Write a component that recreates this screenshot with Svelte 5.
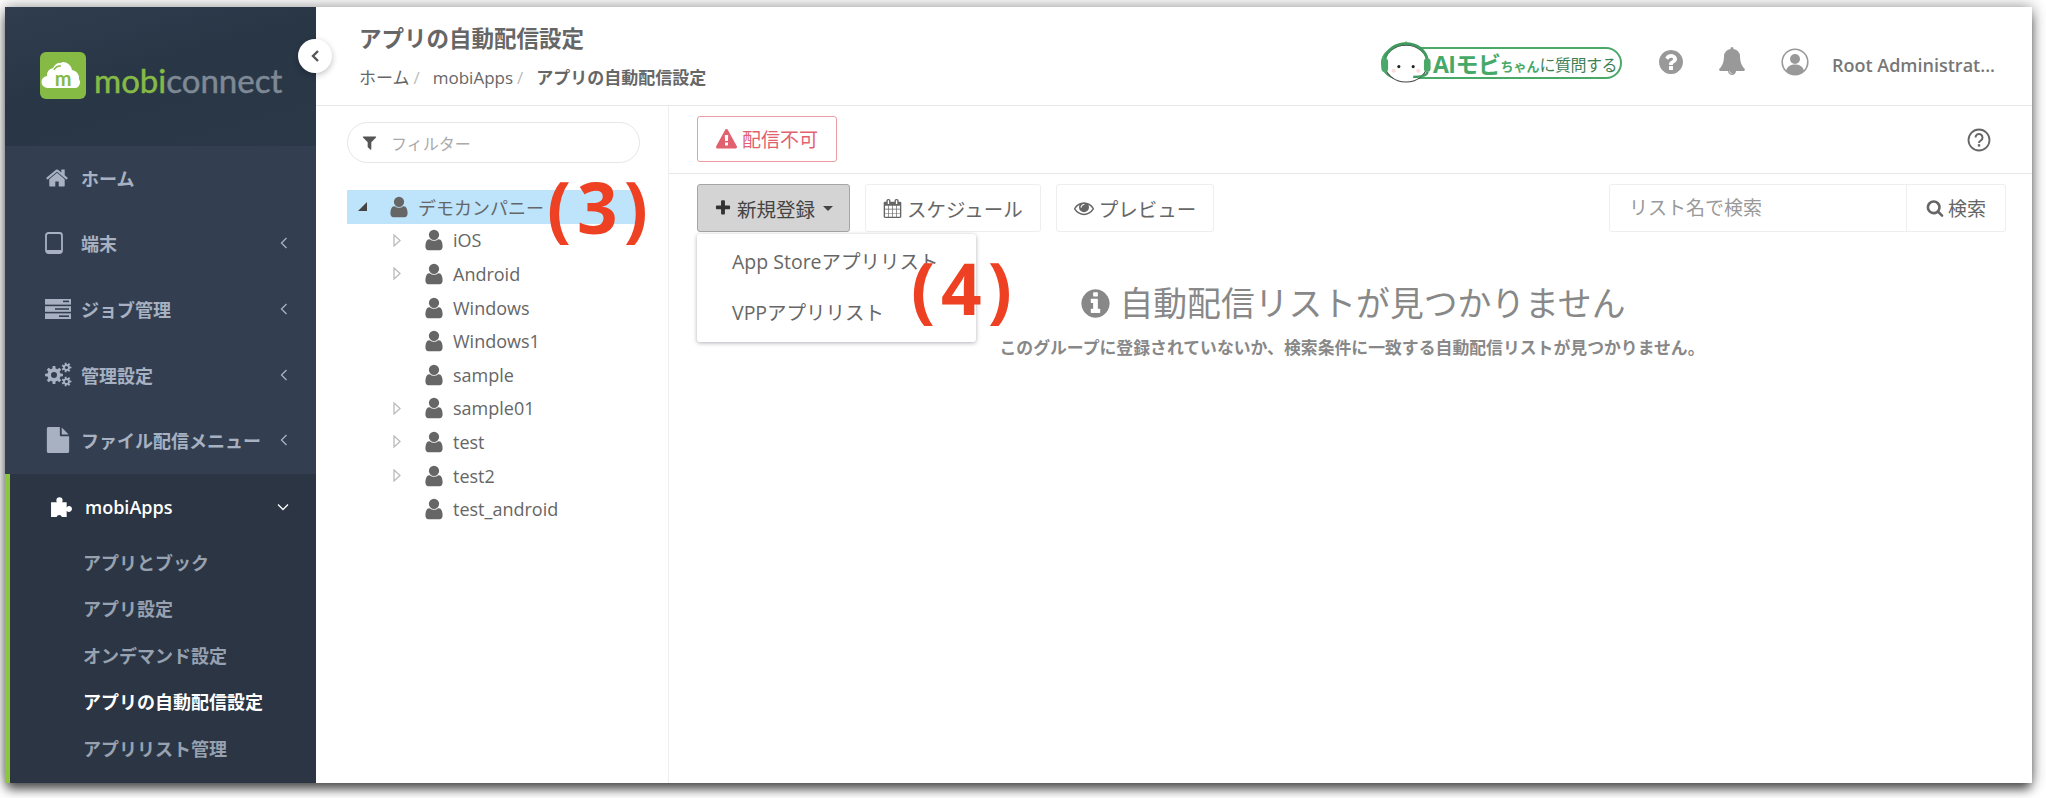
<script lang="ts">
	// FontAwesome-style glyphs, 1792 grid
	const fa = {
		home: 'M1472 992v480q0 26-19 45t-45 19h-384v-384h-256v384h-384q-26 0-45-19t-19-45v-480q0-1 .5-3t.5-3l575-474 575 474q1 2 1 6zm223-69l-62 74q-8 9-21 11h-3q-13 0-21-7l-692-577-692 577q-12 8-24 7-13-2-21-11l-62-74q-8-10-7-23.5t11-21.5l719-599q32-26 76-26t76 26l244 204v-195q0-14 9-23t23-9h192q14 0 23 9t9 23v408l219 182q10 8 11 21.5t-7 23.5z',
		user: 'M1536 1399q0 109-62.5 187t-150.5 78h-854q-88 0-150.5-78t-62.5-187q0-85 8.5-160.5t31.5-152 58.5-131 94-89 134.5-34.5q131 128 313 128t313-128q76 0 134.5 34.5t94 89 58.5 131 31.5 152 8.5 160.5zm-256-887q0 159-112.5 271.5t-271.5 112.5-271.5-112.5-112.5-271.5 112.5-271.5 271.5-112.5 271.5 112.5 112.5 271.5z',
		search: 'M1216 832q0-185-131.5-316.5t-316.5-131.5-316.5 131.5-131.5 316.5 131.5 316.5 316.5 131.5 316.5-131.5 131.5-316.5zm512 832q0 52-38 90t-90 38q-54 0-90-38l-343-342q-179 124-399 124-143 0-273.5-55.5t-225-150-150-225-55.5-273.5 55.5-273.5 150-225 225-150 273.5-55.5 273.5 55.5 225 150 150 225 55.5 273.5q0 220-124 399l343 343q37 37 37 90z',
		filter: 'M1595 295q17 41-14 70l-493 493v742q0 42-39 59-13 5-25 5-27 0-45-19l-256-256q-19-19-19-45v-486l-493-493q-31-29-14-70 17-39 59-39h1280q42 0 59 39z',
		plus: 'M1600 736v192q0 40-28 68t-68 28h-416v416q0 40-28 68t-68 28h-192q-40 0-68-28t-28-68v-416h-416q-40 0-68-28t-28-68v-192q0-40 28-68t68-28h416v-416q0-40 28-68t68-28h192q40 0 68 28t28 68v416h416q40 0 68 28t28 68z',
		warning: 'M1024 1375v-190q0-14-9.5-23.5t-22.5-9.5h-192q-13 0-22.5 9.5t-9.5 23.5v190q0 14 9.5 23.5t22.5 9.5h192q13 0 22.5-9.5t9.5-23.5zm-2-374l18-459q0-12-10-19-13-11-24-11h-220q-11 0-24 11-10 7-10 21l17 457q0 10 10 16.5t24 6.5h185q14 0 23.5-6.5t10.5-16.5zm-14-934l768 1408q35 63-2 126-17 29-46.5 46t-63.5 17h-1536q-34 0-63.5-17t-46.5-46q-37-63-2-126l768-1408q17-31 47-49t65-18 65 18 47 49z',
		info: 'M1152 1376v-160q0-14-9-23t-23-9h-96v-512q0-14-9-23t-23-9h-320q-14 0-23 9t-9 23v160q0 14 9 23t23 9h96v320h-96q-14 0-23 9t-9 23v160q0 14 9 23t23 9h448q14 0 23-9t9-23zm-128-896v-160q0-14-9-23t-23-9h-192q-14 0-23 9t-9 23v160q0 14 9 23t23 9h192q14 0 23-9t9-23zm640 416q0 209-103 385.5t-279.5 279.5-385.5 103-385.5-103-279.5-279.5-103-385.5 103-385.5 279.5-279.5 385.5-103 385.5 103 279.5 279.5 103 385.5z',
		question: 'M1024 1376v-192q0-14-9-23t-23-9h-192q-14 0-23 9t-9 23v192q0 14 9 23t23 9h192q14 0 23-9t9-23zm256-672q0-88-55.5-163t-138.5-116-170-41q-243 0-371 213-15 24 8 42l132 100q7 6 19 6 16 0 25-12 53-68 86-92 34-24 86-24 48 0 85.5 26t37.5 59q0 38-20 61t-68 45q-63 28-115.5 86.5t-52.5 125.5v36q0 14 9 23t23 9h192q14 0 23-9t9-23q0-19 21.5-49.5t54.5-49.5q32-18 49-28.5t46-35 44.5-48 28-60.5 12.5-81zm384 192q0 209-103 385.5t-279.5 279.5-385.5 103-385.5-103-279.5-279.5-103-385.5 103-385.5 279.5-279.5 385.5-103 385.5 103 279.5 279.5 103 385.5z',
		bell: 'M912 1696q0-16-16-16-59 0-101.5-42.5t-42.5-101.5q0-16-16-16t-16 16q0 73 51.5 124.5t124.5 51.5q16 0 16-16zm816-288q0 52-38 90t-90 38h-448q0 106-75 181t-181 75-181-75-75-181h-448q-52 0-90-38t-38-90q50-42 91-88t85-119.5 74.5-158.5 50-206 19.5-260q0-152 117-282.5t307-158.5q-8-19-8-39 0-40 28-68t68-28 68 28 28 68q0 20-8 39 190 28 307 158.5t117 282.5q0 139 19.5 260t50 206 74.5 158.5 85 119.5 91 88z',
		file: 'M1152 512v-472q22 14 36 28l408 408q14 14 28 36h-472zm-128 32q0 40 28 68t68 28h544v1056q0 40-28 68t-68 28h-1344q-40 0-68-28t-28-68v-1600q0-40 28-68t68-28h800v544z',
		eye: 'M1664 960q-152-236-381-353 61 104 61 225 0 185-131.5 316.5t-316.5 131.5-316.5-131.5-131.5-316.5q0-121 61-225-229 117-381 353 133 205 333.5 326.5t434.5 121.5 434.5-121.5 333.5-326.5zm-720-384q0-20-14-34t-34-14q-125 0-214.5 89.5t-89.5 214.5q0 20 14 34t34 14 34-14 14-34q0-86 61-147t147-61q20 0 34-14t14-34zm848 384q0 34-20 69-140 230-376.5 368.5t-499.5 138.5-499.5-139-376.5-368q-20-35-20-69t20-69q140-229 376.5-368t499.5-139 499.5 139 376.5 368q20 35 20 69z',
		calendar: 'M192 1664h288v-288h-288v288zm352 0h320v-288h-320v288zm-352-352h288v-320h-288v320zm352 0h320v-320h-320v320zm-352-384h288v-288h-288v288zm736 736h320v-288h-320v288zm-384-736h320v-288h-320v288zm768 736h288v-288h-288v288zm-384-352h320v-320h-320v320zm-352-864v-288q0-13-9.5-22.5t-22.5-9.5h-64q-13 0-22.5 9.5t-9.5 22.5v288q0 13 9.5 22.5t22.5 9.5h64q13 0 22.5-9.5t9.5-22.5zm736 864h288v-320h-288v320zm-384-384h320v-288h-320v288zm384 0h288v-288h-288v288zm32-480v-288q0-13-9.5-22.5t-22.5-9.5h-64q-13 0-22.5 9.5t-9.5 22.5v288q0 13 9.5 22.5t22.5 9.5h64q13 0 22.5-9.5t9.5-22.5zm384-64v1280q0 52-38 90t-90 38h-1408q-52 0-90-38t-38-90v-1280q0-52 38-90t90-38h128v-96q0-66 47-113t113-47h64q66 0 113 47t47 113v96h384v-96q0-66 47-113t113-47h64q66 0 113 47t47 113v96h128q52 0 90 38t38 90z'
	};

	// toothed wheel with a round hole, drawn with fill-rule evenodd
	function gear(cx: number, cy: number, outer: number, inner: number, hole: number, teeth: number) {
		const pts: string[] = [];
		const step = (Math.PI * 2) / teeth;
		for (let i = 0; i < teeth; i++) {
			const a = i * step;
			const w = step * 0.24;
			[[a - w * 1.3, inner], [a - w * 0.8, outer], [a + w * 0.8, outer], [a + w * 1.3, inner]].forEach(([t, r]) => {
				pts.push(`${(cx + Math.cos(t) * r).toFixed(2)} ${(cy + Math.sin(t) * r).toFixed(2)}`);
			});
		}
		return `M${pts.join('L')}Z M${cx - hole} ${cy}a${hole} ${hole} 0 1 0 ${hole * 2} 0a${hole} ${hole} 0 1 0 ${-hole * 2} 0Z`;
	}

	const navItems = [
		{ icon: 'home', label: 'ホーム', arrow: false },
		{ icon: 'tablet', label: '端末', arrow: true },
		{ icon: 'server', label: 'ジョブ管理', arrow: true },
		{ icon: 'cogs', label: '管理設定', arrow: true },
		{ icon: 'file', label: 'ファイル配信メニュー', arrow: true }
	];

	const subItems = [
		{ label: 'アプリとブック' },
		{ label: 'アプリ設定' },
		{ label: 'オンデマンド設定' },
		{ label: 'アプリの自動配信設定', active: true },
		{ label: 'アプリリスト管理' }
	];

	const treeChildren = [
		{ label: 'iOS', more: true },
		{ label: 'Android', more: true },
		{ label: 'Windows', more: false },
		{ label: 'Windows1', more: false },
		{ label: 'sample', more: false },
		{ label: 'sample01', more: true },
		{ label: 'test', more: true },
		{ label: 'test2', more: true },
		{ label: 'test_android', more: false }
	];
</script>

<div class="page">
	<div class="window">
		<aside class="sidebar">
			<div class="logo-block">
				<svg class="logo-mark" viewBox="0 0 46 47">
					<rect width="46" height="47" rx="6" fill="#85bb45" />
					<path d="M8 36a6 6 0 0 1-1-12 7 7 0 0 1 6-8 10 10 0 0 1 19 2 8 8 0 0 1 7 9 6 6 0 0 1-3 9z" fill="#fff" />
					<path d="M12 15a10 10 0 0 1 10-5M14 18a7 7 0 0 1 7-4" fill="none" stroke="#85bb45" stroke-width="1.5" />
					<text x="23" y="34" text-anchor="middle" class="logo-m">m</text>
				</svg>
				<span class="logo-word"><b>mobi</b>connect</span>
			</div>
			<nav class="menu">
				{#each navItems as item}
					<div class="nav-item">
						<span class="nav-icon">
							{#if item.icon === 'home'}
								<svg viewBox="0 0 1792 1792" width="24" height="24"><path d={fa.home} /></svg>
							{:else if item.icon === 'file'}
								<svg viewBox="0 0 1792 1792" width="26" height="26"><path d={fa.file} /></svg>
							{:else if item.icon === 'tablet'}
								<svg viewBox="0 0 18 22" width="18" height="22">
									<rect x="1" y="1" width="16" height="20" rx="2.5" fill="none" stroke="currentColor" stroke-width="1.8" />
									<rect x="2" y="18" width="14" height="2.5" />
								</svg>
							{:else if item.icon === 'server'}
								<svg viewBox="0 0 26 20" width="26" height="20">
									<rect y="0" width="26" height="5.6" />
									<rect y="7.2" width="26" height="5.6" />
									<rect y="14.4" width="26" height="5.6" />
									<rect x="18" y="1.6" width="6" height="1.6" fill="#333f50" />
									<rect x="10" y="9.2" width="14" height="1.6" fill="#333f50" />
									<rect x="14" y="16.4" width="10" height="1.6" fill="#333f50" />
								</svg>
							{:else}
								<svg viewBox="0 0 27 25" width="27" height="25" fill-rule="evenodd">
									<path d={gear(9, 13, 9, 6.6, 3, 8)} />
									<path d={gear(21.5, 5.500, 5, 3.500, 1.600, 7)} />
									<path d={gear(21.5, 19.500, 5, 3.500, 1.600, 7)} />
								</svg>
							{/if}
						</span>
						<span class="nav-label">{item.label}</span>
						{#if item.arrow}
							<svg class="nav-arrow" viewBox="0 0 8 12" width="8" height="12"><path d="M6.5 1 1.500 6l5 5" /></svg>
						{/if}
					</div>
				{/each}
				<div class="group">
					<div class="nav-item group-head">
						<svg class="puzzle" viewBox="0 0 24 24" width="25" height="25">
							<path d="M1 8h5.600a3 3 0 0 1-.5-1.800 3 3 0 0 1 6 0 3 3 0 0 1-.5 1.800H16v5a2.800 2.800 0 0 1 4.200-.8 2.800 2.800 0 0 1-.2 4.300 2.800 2.800 0 0 1-4-.5V22h-4.500a2.800 2.800 0 0 0-5.200 0H1z" fill="#fff" />
						</svg>
						<span class="nav-label">mobiApps</span>
						<svg class="nav-arrow down" viewBox="0 0 12 8" width="12" height="8"><path d="M1 1.500l5 5 5-5" /></svg>
					</div>
					{#each subItems as sub}
						<div class="sub-item" class:active={sub.active}>{sub.label}</div>
					{/each}
				</div>
			</nav>
		</aside>

		<button class="collapse" aria-label="collapse">
			<svg viewBox="0 0 10 14" width="10" height="14"><path d="M8 2 3 7l5 5" /></svg>
		</button>

		<main class="main">
			<header class="topbar">
				<div class="heading">
					<h1>アプリの自動配信設定</h1>
					<div class="crumbs">
						<span>ホーム</span><i>/</i><span>mobiApps</span><i>/</i><strong>アプリの自動配信設定</strong>
					</div>
				</div>
				<div class="top-actions">
					<div class="ai-btn">
						<svg class="ai-face" viewBox="0 0 50 42" width="52" height="43">
							<path d="M22 4c1-2 3-3 4-3 0 2-1 3-3 4z" fill="#a9d18e" />
							<ellipse cx="25" cy="23" rx="21" ry="18" fill="#fff" stroke="#444" stroke-width="1" />
							<path d="M4 20C6 9 15 3.500 25 3.500S44 9 46 20" fill="none" stroke="#3f9a5f" stroke-width="2.800" />
							<rect x="1" y="18" width="6.500" height="13" rx="3" fill="#4aa868" />
							<rect x="42.500" y="18" width="6.500" height="13" rx="3" fill="#4aa868" />
							<path d="M46 31c0 4-6 5-14 5" fill="none" stroke="#3f9a5f" stroke-width="2.200" />
							<circle cx="18" cy="26" r="1.500" fill="#222" />
							<circle cx="32" cy="26" r="1.500" fill="#222" />
							<circle cx="13" cy="30" r="2" fill="#fbdcdc" />
							<circle cx="37" cy="30" r="2" fill="#fbdcdc" />
						</svg>
						<span class="ai-big">AIモビ</span><span class="ai-small">ちゃん</span><span class="ai-mid">に質問する</span>
					</div>
					<svg class="top-icon q" viewBox="0 0 1792 1792" width="28" height="28"><path d={fa.question} /></svg>
					<svg class="top-icon bell" viewBox="0 0 1792 1792" width="28" height="28"><path d={fa.bell} /></svg>
					<svg class="top-icon avatar" viewBox="0 0 28 28" width="28" height="28">
						<circle cx="14" cy="14" r="12.800" fill="#fff" stroke="#999" stroke-width="1.600" />
						<circle cx="14" cy="11" r="5" />
						<path d="M5 23c1-5 5-6.500 9-6.500s8 1.500 9 6.500a12.500 12.500 0 0 1-18 0z" />
					</svg>
					<span class="username">Root Administrat...</span>
				</div>
			</header>

			<div class="body">
				<section class="tree-panel">
					<div class="filter">
						<svg viewBox="0 0 1792 1792" width="17" height="17"><path d={fa.filter} /></svg>
						<span>フィルター</span>
					</div>
					<div class="tree">
						<div class="tree-row root">
							<span class="tri-open"></span>
							<svg class="person" viewBox="0 0 1792 1792" width="24" height="24"><path d={fa.user} /></svg>
							<span>デモカンパニー</span>
						</div>
						{#each treeChildren as node}
							<div class="tree-row child">
								<span class="tri-slot">
									{#if node.more}
										<svg viewBox="0 0 8 13" width="8" height="13"><path d="M1 1l6 5.500-6 5.500z" /></svg>
									{/if}
								</span>
								<svg class="person" viewBox="0 0 1792 1792" width="24" height="24"><path d={fa.user} /></svg>
								<span>{node.label}</span>
							</div>
						{/each}
					</div>
					<span class="callout three">(3)</span>
				</section>

				<section class="content">
					<div class="status-bar">
						<div class="status">
							<svg viewBox="0 0 1792 1792" width="21" height="21"><path d={fa.warning} /></svg>
							配信不可
						</div>
						<svg class="help" viewBox="0 0 24 24" width="24" height="24">
							<circle cx="12" cy="12" r="10.500" fill="none" stroke="#666" stroke-width="1.800" />
							<path d="M8.500 9.500a3.500 3.500 0 1 1 5.300 3c-1.300.8-1.800 1.300-1.800 2.500" fill="none" stroke="#666" stroke-width="2" />
							<rect x="10.800" y="16.200" width="2.400" height="2.400" fill="#666" />
						</svg>
					</div>

					<div class="toolbar">
						<div class="left-tools">
							<div class="btn primary">
								<svg viewBox="0 0 1792 1792" width="18" height="18"><path d={fa.plus} /></svg>
								新規登録
								<span class="caret"></span>
							</div>
							<div class="btn">
								<svg viewBox="0 0 1792 1792" width="19" height="19"><path d={fa.calendar} /></svg>
								スケジュール
							</div>
							<div class="btn">
								<svg viewBox="0 0 1792 1792" width="20" height="20"><path d={fa.eye} /></svg>
								プレビュー
							</div>
						</div>
						<div class="search">
							<span class="search-input">リスト名で検索</span>
							<span class="search-btn">
								<svg viewBox="0 0 1792 1792" width="18" height="18"><path d={fa.search} /></svg>
								検索
							</span>
						</div>
					</div>

					<div class="dropdown">
						<div>App Storeアプリリスト</div>
						<div>VPPアプリリスト</div>
					</div>

					<div class="empty">
						<h2>
							<svg viewBox="0 0 1792 1792" width="33" height="33"><path d={fa.info} /></svg>
							自動配信リストが見つかりません
						</h2>
						<p>このグループに登録されていないか、検索条件に一致する自動配信リストが見つかりません。</p>
					</div>

					<span class="callout four">(4)</span>
				</section>
			</div>
		</main>
	</div>
</div>

<style>
	:global(body) {
		margin: 0;
		background: #fff;
	}

	.page {
		width: 2046px;
		height: 798px;
		box-sizing: border-box;
		padding: 7px 14px 15px 5px;
		overflow: hidden;
		font-family: 'Open Sans', 'Noto Sans CJK JP', sans-serif;
		color: #676a6c;
	}

	.window {
		position: relative;
		display: flex;
		height: 776px;
		background: #fff;
		box-shadow: 0 8px 10px -2px rgba(0, 0, 0, 0.6), 0 0 14px rgba(0, 0, 0, 0.45);
	}

	.sidebar {
		width: 311px;
		flex-shrink: 0;
		background: #333f50;
		overflow: hidden;
	}

	.logo-block {
		height: 139px;
		box-sizing: border-box;
		padding: 45px 0 0 35px;
		display: flex;
		align-items: flex-start;
		gap: 8px;
		background: linear-gradient(165deg, #2f3d4e 0%, #293646 45%, #2a3848 100%);
	}

	.logo-mark {
		width: 46px;
		height: 47px;
		flex-shrink: 0;
	}

	.logo-m {
		font-family: 'Lato', sans-serif;
		font-size: 20px;
		font-weight: 700;
		fill: #85bb45;
	}

	.logo-word {
		font-family: 'Lato', sans-serif;
		font-size: 33px;
		line-height: 56px;
		-webkit-text-stroke: 0.5px currentColor;
		color: #7f8995;
	}

	.logo-word b {
		font-weight: 400;
		color: #85bb45;
	}

	.nav-item {
		position: relative;
		height: 65.6px;
		box-sizing: border-box;
		padding: 0 0 2px 40px;
		display: flex;
		align-items: center;
		color: #a7b1c2;
		font-size: 18px;
		font-weight: 600;
	}

	.nav-icon {
		width: 36px;
		display: flex;
		align-items: center;
	}

	.nav-icon svg {
		fill: currentColor;
	}

	.nav-arrow {
		position: absolute;
		right: 28px;
		fill: none;
		stroke: #a7b1c2;
		stroke-width: 1.300;
	}

	.nav-arrow.down {
		right: 27px;
		stroke: #fff;
	}

	.group {
		background: #2b3544;
		border-left: 5px solid #8cc63f;
		height: 320px;
	}

	.group-head {
		padding: 0 0 0 36px;
		color: #fff;
		gap: 10px;
	}

	.puzzle {
		margin-left: 4px;
	}

	.sub-item {
		height: 46.500px;
		line-height: 46.500px;
		padding-left: 73px;
		color: #97a1af;
		font-size: 18px;
		font-weight: 600;
	}

	.sub-item.active {
		color: #fff;
	}

	.collapse {
		position: absolute;
		left: 293px;
		top: 32px;
		width: 34px;
		height: 34px;
		padding: 0;
		border: none;
		border-radius: 50%;
		background: #fff;
		box-shadow: 0 2px 6px rgba(0, 0, 0, 0.25);
		display: flex;
		align-items: center;
		justify-content: center;
		z-index: 3;
	}

	.collapse path {
		fill: none;
		stroke: #555;
		stroke-width: 2.400;
	}

	.main {
		flex: 1;
		min-width: 0;
		display: flex;
		flex-direction: column;
	}

	.topbar {
		height: 99px;
		flex-shrink: 0;
		box-sizing: border-box;
		border-bottom: 1px solid #e7e7e7;
		display: flex;
		justify-content: space-between;
		padding: 0 37px 0 43px;
	}

	.heading h1 {
		margin: 16px 0 0;
		font-size: 22.500px;
		line-height: 32px;
		font-weight: 700;
		color: #666;
	}

	.crumbs {
		margin-top: 11px;
		font-size: 17px;
		line-height: 24px;
		color: #666;
		display: flex;
	}

	.crumbs i {
		font-style: normal;
		color: #bbb;
		margin: 0 13px 0 4px;
	}

	.crumbs strong {
		font-weight: 700;
	}

	.top-actions {
		display: flex;
		align-items: flex-start;
		padding-top: 38px;
	}

	.ai-btn {
		position: relative;
		width: 241px;
		height: 32px;
		margin-top: 2px;
		box-sizing: border-box;
		border: 2px solid #4aa868;
		border-radius: 17px;
		padding-left: 50px;
		display: flex;
		align-items: center;
		color: #3f9a5f;
		white-space: nowrap;
	}

	.ai-face {
		position: absolute;
		left: -3px;
		top: -9px;
	}

	.ai-big {
		font-size: 23px;
		font-weight: 700;
		color: #46a968;
		letter-spacing: -0.5px;
	}

	.ai-small {
		font-size: 13px;
		font-weight: 700;
		color: #46a968;
		margin-top: 5px;
	}

	.ai-mid {
		font-size: 16px;
		font-weight: 400;
		color: #3d7f55;
		margin-top: 2px;
		letter-spacing: -0.5px;
	}

	.top-icon {
		fill: #999;
		flex-shrink: 0;
	}

	.top-icon.q {
		margin: 3px 0 0 35px;
	}

	.top-icon.bell {
		margin: 2px 0 0 33px;
	}

	.top-icon.avatar {
		margin: 3px 0 0 35px;
	}

	.username {
		margin: 8px 0 0 23px;
		font-size: 18px;
		font-weight: 600;
		line-height: 24px;
		color: #777;
		white-space: nowrap;
	}

	.body {
		flex: 1;
		display: flex;
		min-height: 0;
	}

	.tree-panel {
		position: relative;
		width: 353px;
		flex-shrink: 0;
		box-sizing: border-box;
		border-right: 1px solid #eee;
		padding: 16px 0 0 31px;
	}

	.filter {
		width: 293px;
		height: 41px;
		box-sizing: border-box;
		border: 1px solid #e5e6e7;
		border-radius: 21px;
		padding-left: 13px;
		display: flex;
		align-items: center;
		gap: 13px;
		font-size: 16px;
		color: #aaa;
	}

	.filter svg {
		fill: #555;
	}

	.tree {
		margin-top: 27px;
		font-size: 18px;
		color: #666;
	}

	.tree-row {
		width: 293px;
		height: 33.600px;
		display: flex;
		align-items: center;
		box-sizing: border-box;
		white-space: nowrap;
	}

	.tree-row.root {
		background: #bde4fb;
		padding-left: 11px;
	}

	.tri-open {
		width: 0;
		height: 0;
		border-style: solid;
		border-width: 0 0 9px 9px;
		border-color: transparent transparent #444 transparent;
		margin-right: 20px;
	}

	.tree-row.root .person {
		margin-right: 7px;
	}

	.tree-row.child {
		padding-left: 46px;
	}

	.tree-row.child .person {
		margin-right: 7px;
	}

	.tri-slot {
		width: 29px;
		display: flex;
		align-items: center;
	}

	.tri-slot path {
		fill: #fff;
		stroke: #bbb;
		stroke-width: 1.300;
	}

	.person {
		fill: #666;
		flex-shrink: 0;
	}

	.content {
		position: relative;
		flex: 1;
		min-width: 0;
	}

	.status-bar {
		height: 68px;
		box-sizing: border-box;
		border-bottom: 1px solid #e7e7e7;
		display: flex;
		justify-content: space-between;
		align-items: center;
		padding: 0 41px 0 28px;
	}

	.status {
		width: 140px;
		height: 46px;
		box-sizing: border-box;
		margin-top: -1px;
		border: 1px solid #eb9ca5;
		border-radius: 3px;
		display: flex;
		align-items: center;
		justify-content: center;
		gap: 5px;
		font-size: 19px;
		color: #e2616f;
	}

	.status svg {
		fill: #e2616f;
	}

	.toolbar {
		display: flex;
		justify-content: space-between;
		padding: 10px 26px 0 28px;
	}

	.left-tools {
		display: flex;
		gap: 15px;
	}

	.btn {
		height: 48px;
		box-sizing: border-box;
		padding: 0 17px;
		border: 1px solid #eee;
		border-radius: 3px;
		display: flex;
		align-items: center;
		gap: 5px;
		font-size: 19.500px;
		color: #666;
		white-space: nowrap;
	}

	.btn svg {
		fill: #666;
	}

	.btn.primary {
		background: #d4d4d4;
		border-color: #a5a5a5;
		color: #444;
		padding: 0 16px;
	}

	.btn.primary svg {
		fill: #333;
	}

	.caret {
		width: 0;
		height: 0;
		margin-left: 3px;
		border-style: solid;
		border-width: 5px 5px 0;
		border-color: #444 transparent transparent;
	}

	.search {
		width: 397px;
		height: 48px;
		box-sizing: border-box;
		border: 1px solid #eee;
		border-radius: 3px;
		display: flex;
		font-size: 19px;
	}

	.search-input {
		flex: 1;
		padding-left: 19px;
		line-height: 46px;
		color: #999;
		border-right: 1px solid #eee;
	}

	.search-btn {
		width: 98px;
		display: flex;
		align-items: center;
		justify-content: center;
		gap: 4px;
		color: #666;
	}

	.search-btn svg {
		fill: #666;
	}

	.dropdown {
		position: absolute;
		left: 28px;
		top: 128px;
		width: 279px;
		height: 108px;
		box-sizing: border-box;
		padding-top: 2px;
		background: #fff;
		border-radius: 3px;
		box-shadow: 0 1px 4px rgba(60, 60, 80, 0.4);
		font-size: 19.500px;
		color: #666;
		z-index: 2;
	}

	.dropdown div {
		height: 51px;
		line-height: 51px;
		padding-left: 35px;
		white-space: nowrap;
	}

	.empty {
		margin-top: 49px;
		text-align: center;
		padding-left: 3px;
	}

	.empty h2 {
		margin: 0;
		font-size: 33.800px;
		font-weight: 400;
		line-height: 44px;
		color: #888;
		display: flex;
		align-items: center;
		justify-content: center;
		gap: 8px;
	}

	.empty h2 svg {
		fill: #888;
	}

	.empty p {
		margin: 12px 0 0;
		font-size: 16.850px;
		font-weight: 700;
		line-height: 22px;
		color: #888;
	}

	.callout {
		position: absolute;
		font-family: 'Open Sans', sans-serif;
		font-size: 71px;
		font-weight: 700;
		line-height: 1;
		color: #ee4023;
		letter-spacing: 6px;
		z-index: 4;
	}

	.callout.three {
		left: 231px;
		top: 65px;
	}

	.callout.four {
		left: 242px;
		top: 146px;
	}
</style>
